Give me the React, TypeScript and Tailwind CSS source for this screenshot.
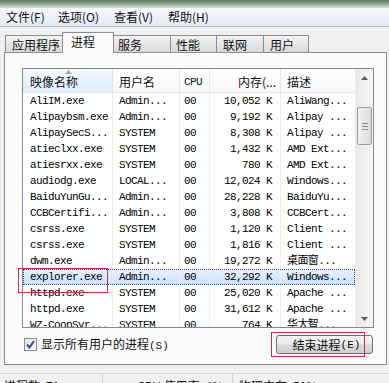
import React from "react";

type Row = [string, string, string, string, string];

const rows: Row[] = [
  ["AliIM.exe", "Admin...", "00", "10,052 K", "AliWang..."],
  ["Alipaybsm.exe", "Admin...", "00", "9,192 K", "Alipay ..."],
  ["AlipaySecS...", "SYSTEM", "00", "8,308 K", "Alipay ..."],
  ["atieclxx.exe", "SYSTEM", "00", "1,432 K", "AMD Ext..."],
  ["atiesrxx.exe", "SYSTEM", "00", "780 K", "AMD Ext..."],
  ["audiodg.exe", "LOCAL...", "00", "12,024 K", "Windows..."],
  ["BaiduYunGu...", "Admin...", "00", "28,228 K", "BaiduYu..."],
  ["CCBCertifi...", "Admin...", "00", "3,808 K", "CCBCert..."],
  ["csrss.exe", "SYSTEM", "00", "1,120 K", "Client ..."],
  ["csrss.exe", "SYSTEM", "00", "1,816 K", "Client ..."],
  ["dwm.exe", "Admin...", "00", "19,272 K", "桌面窗..."],
  ["explorer.exe", "Admin...", "00", "32,292 K", "Windows..."],
  ["httpd.exe", "SYSTEM", "00", "25,020 K", "Apache ..."],
  ["httpd.exe", "SYSTEM", "00", "31,612 K", "Apache ..."],
  ["WZ-CoopSvr...", "SYSTEM", "00", "764 K", "华大智..."],
];

const tabs = [
  { label: "应用程序", w: "w-[58px]", pl: "pl-[6px]" },
  { label: "进程", w: "w-[52px]", pl: "pl-[8px]", active: true },
  { label: "服务", w: "w-[58px]", pl: "pl-[4px]" },
  { label: "性能", w: "w-[47px]", pl: "pl-[5px]" },
  { label: "联网", w: "w-[48px]", pl: "pl-[6px]" },
  { label: "用户", w: "w-[46px]", pl: "pl-[6px]" },
];

const menus = [
  { label: "文件(F)", w: "w-[52px]" },
  { label: "选项(O)", w: "w-[56px]" },
  { label: "查看(V)", w: "w-[54px]" },
  { label: "帮助(H)", w: "w-[60px]" },
];

function ProcessRow({ row, selected }: { row: Row; selected?: boolean }) {
  return (
    <div
      className={`flex h-[16px] shrink-0 items-center whitespace-nowrap ${
        selected
          ? "bg-[linear-gradient(#e9f2fd,#cbe0fb)] outline-1 outline-dotted outline-[#2f4f80] -outline-offset-1"
          : ""
      }`}
    >
      <div className="h-full w-[90px] overflow-hidden border-r border-[#eeeeee] pl-[7px] leading-[16px]">
        {row[0]}
      </div>
      <div className="h-full w-[67px] overflow-hidden border-r border-[#eeeeee] pl-[6px] leading-[16px]">
        {row[1]}
      </div>
      <div className="h-full w-[30px] overflow-hidden border-r border-[#eeeeee] pl-[4px] leading-[16px]">
        {row[2]}
      </div>
      <div className="h-full w-[71px] overflow-hidden border-r border-[#eeeeee] pr-[8px] text-right leading-[16px]">
        {row[3]}
      </div>
      <div className="h-full w-[74px] overflow-hidden pl-[6px] leading-[16px]">
        {row[4]}
      </div>
    </div>
  );
}

export default function App() {
  return (
    <div className="relative flex h-[383px] w-[389px] flex-col overflow-hidden bg-[#f0f0f0] font-['Noto_Sans_CJK_SC',sans-serif] text-[12px] text-[#111]">
      {/* window frame strip */}
      <div className="h-[8px] shrink-0 bg-[linear-gradient(#5b7a5f,#9fb59f_60%,#d8e1d8)]" />

      {/* menu */}
      <div className="flex h-[19px] shrink-0 items-center border-b border-[#b8bec8] bg-[linear-gradient(#f7f9fd,#e3e9f4)] pl-[6px] leading-[18px]">
        {menus.map((m) => (
          <span key={m.label} className={m.w}>
            {m.label}
          </span>
        ))}
      </div>

      {/* tabs */}
      <div className="relative z-10 mt-[5px] flex h-[21px] shrink-0 items-start pl-[6px]">
        {tabs.map((t) =>
          t.active ? (
            <div
              key={t.label}
              className={`-ml-px h-[21px] ${t.w} ${t.pl} border border-b-0 border-[#898c95] bg-[#fbfbfb] leading-[18px]`}
            >
              {t.label}
            </div>
          ) : (
            <div
              key={t.label}
              className={`-ml-px mt-[3px] h-[17px] ${t.w} ${t.pl} border border-b-0 border-[#898c95] bg-[linear-gradient(#f3f3f3,#d9d9d9)] leading-[17px]`}
            >
              {t.label}
            </div>
          )
        )}
      </div>

      {/* tab page */}
      <div className="-mt-px ml-[4px] flex h-[313px] w-[383px] shrink-0 flex-col border border-[#898c95] bg-[#fbfbfb] pl-[17px] pt-[15px]">
        {/* list view */}
        <div className="flex h-[260px] w-[352px] border border-[#828790] bg-white">
          <div className="flex w-[332px] flex-col overflow-hidden">
            {/* header */}
            <div className="flex h-[24px] shrink-0 items-stretch border-b border-[#e5e5e5] bg-[linear-gradient(#ffffff,#f7f8fa)]">
              <div className="relative flex w-[90px] items-center border-r border-[#dfe3e8] bg-[linear-gradient(#f4f9fe,#deedfb)] pl-[7px] pt-[3px]">
                映像名称
                <svg
                  className="absolute left-[42px] top-[1px]"
                  width="7"
                  height="4"
                  viewBox="0 0 7 4"
                >
                  <path d="M3.5 0 L7 4 L0 4 Z" fill="#97a9c3" />
                </svg>
              </div>
              <div className="flex w-[67px] items-center border-r border-[#e3e6ea] pl-[6px] pt-[3px]">
                用户名
              </div>
              <div className="flex w-[30px] items-center border-r border-[#e3e6ea] pl-[4px] pt-[3px] font-['Liberation_Mono',monospace] text-[11px] tracking-[-0.6px]">
                CPU
              </div>
              <div className="flex w-[71px] items-center justify-end border-r border-[#e3e6ea] pr-[4px] pt-[3px]">
                内存(...
              </div>
              <div className="flex w-[74px] items-center pl-[6px] pt-[3px]">
                描述
              </div>
            </div>

            {/* rows */}
            <div className="flex flex-col font-['Liberation_Mono','Noto_Sans_CJK_SC',monospace] text-[11px] tracking-[-0.6px] text-black">
              {rows.map((r, i) => (
                <ProcessRow key={i} row={r} selected={i === 11} />
              ))}
            </div>
          </div>

          {/* scrollbar */}
          <div className="flex w-[18px] flex-col border-l border-[#ececec] bg-[linear-gradient(90deg,#e9e9e9,#f6f6f6)]">
            <div className="flex h-[17px] items-center justify-center">
              <svg width="7" height="4" viewBox="0 0 7 4">
                <path d="M3.5 0 L7 4 L0 4 Z" fill="#5d5d5d" />
              </svg>
            </div>
            <div className="ml-[1px] mt-[21px] flex h-[38px] w-[15px] flex-col items-center justify-center gap-[2px] rounded-[2px] border border-[#9a9a9a] bg-[linear-gradient(90deg,#f3f3f3,#dadada)]">
              <div className="h-px w-[6px] bg-[#8a8a8a]" />
              <div className="h-px w-[6px] bg-[#8a8a8a]" />
              <div className="h-px w-[6px] bg-[#8a8a8a]" />
            </div>
            <div className="flex-1" />
            <div className="flex h-[17px] items-center justify-center">
              <svg width="7" height="4" viewBox="0 0 7 4">
                <path d="M0 0 L7 0 L3.5 4 Z" fill="#5d5d5d" />
              </svg>
            </div>
          </div>
        </div>

        {/* bottom controls */}
        <div className="mt-[7px] flex w-[351px] items-center justify-between">
          <label className="ml-[2px] flex items-center gap-[4px]">
            <span className="flex h-[13px] w-[13px] items-center justify-center border border-[#8e8f8f] bg-[linear-gradient(135deg,#e3e3e3,#fafafa)]">
              <svg width="9" height="9" viewBox="0 0 9 9">
                <path
                  d="M1 4.5 L3.5 7.5 L8 1"
                  fill="none"
                  stroke="#2b4c9f"
                  strokeWidth="2"
                />
              </svg>
            </span>
            <span className="leading-[16px]">
              显示所有用户的进程
              <span className="font-['Liberation_Mono',monospace] text-[11px]">
                (S)
              </span>
            </span>
          </label>
          <button className="flex h-[19px] w-[97px] items-center justify-center rounded-[3px] border border-[#707070] bg-[linear-gradient(#f3f3f3_0%,#ebebeb_48%,#dddddd_52%,#cfcfcf_100%)] pl-[4px] leading-[16px] text-[#111]">
            结束进程
            <span className="font-['Liberation_Mono',monospace] text-[11px]">
              (E)
            </span>
          </button>
        </div>
      </div>

      {/* status bar */}
      <div className="mt-[8px] flex h-[12px] shrink-0 border-t border-[#d6d6d6] bg-[#f0f0f0] leading-[16px]">
        <div className="w-[103px] border-r border-[#cfcfcf] pl-[4px] pt-[4px]">
          进程数: 71
        </div>
        <div className="w-[130px] border-r border-[#cfcfcf] pl-[34px] pt-[4px]">
          CPU 使用率: 4%
        </div>
        <div className="flex-1 pl-[6px] pt-[4px]">物理内存: 51%</div>
      </div>

      {/* red annotation boxes */}
      <div className="absolute left-[18px] top-[268px] h-[25px] w-[90px] border border-[#cc2f3a]" />
      <div className="absolute left-[271px] top-[332px] h-[25px] w-[94px] border border-[#cc2f3a]" />
    </div>
  );
}
